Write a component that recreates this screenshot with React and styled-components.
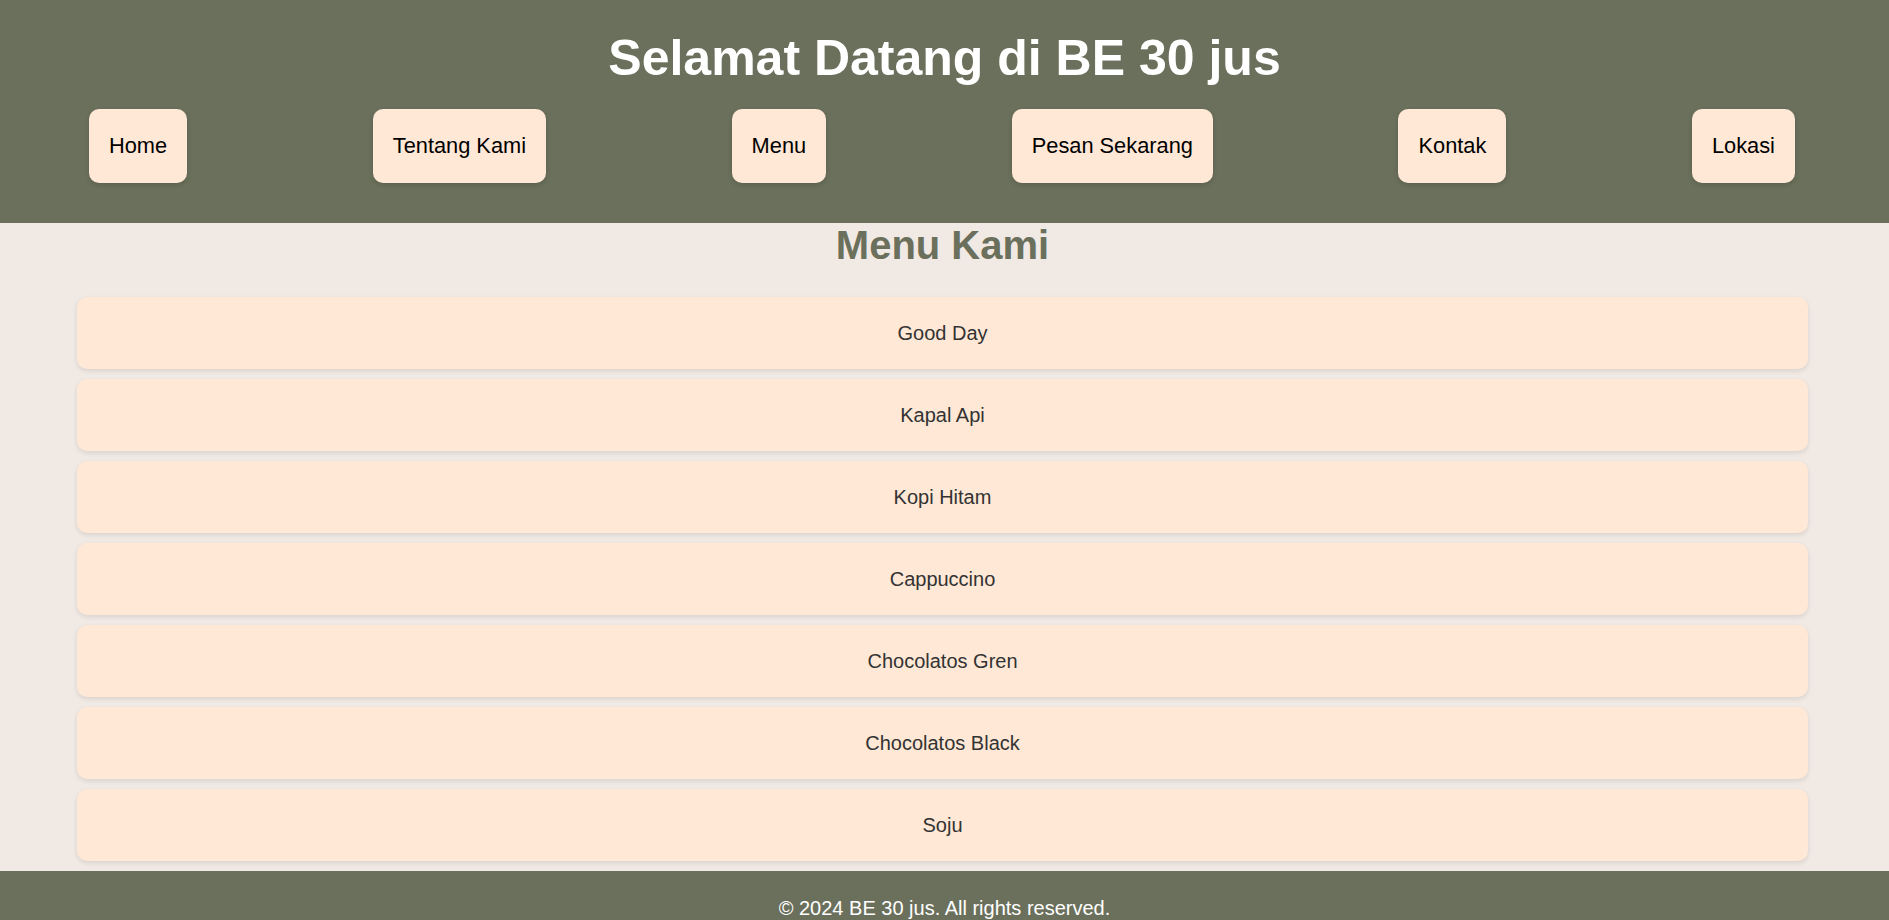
import React from 'react';
import styled, { createGlobalStyle } from 'styled-components';

const GlobalStyle = createGlobalStyle`
  body {
    margin: 0;
    background: #f1e9e4;
    font-family: "Liberation Sans", Arial, sans-serif;
  }
`;

const Header = styled.header`
  background: #6b705c;
  padding: 29px 0 40px;
  text-align: center;
`;

const Title = styled.h1`
  margin: 0 0 22px;
  color: #fff;
  font-size: 50px;
  font-weight: bold;
`;

const Nav = styled.nav`
  display: flex;
  justify-content: space-between;
  padding: 0 94px 0 89px;
`;

const NavButton = styled.a`
  display: block;
  background: #ffe8d6;
  color: #000;
  text-decoration: none;
  font-size: 21.8px;
  line-height: 24px;
  padding: 25px 20px;
  border-radius: 10px;
  box-shadow: 0 2px 5px rgba(0, 0, 0, 0.15);
`;

const Main = styled.main`
  padding: 0 81px 10px 77px;
`;

const SectionTitle = styled.h2`
  margin: 0 0 29px;
  text-align: center;
  color: #6b705c;
  font-size: 40px;
  font-weight: bold;
`;

const MenuList = styled.ul`
  list-style: none;
  margin: 0;
  padding: 0;
  display: flex;
  flex-direction: column;
  gap: 10px;
`;

const MenuItem = styled.li`
  background: #ffe8d6;
  color: #333;
  text-align: center;
  font-size: 20px;
  line-height: 24px;
  padding: 24px;
  border-radius: 10px;
  box-shadow: 0 2px 5px rgba(0, 0, 0, 0.1);
`;

const Footer = styled.footer`
  background: #6b705c;
  color: #fff;
  text-align: center;
  font-size: 20px;
  padding: 26px 0 25px;
`;

const links = ['Home', 'Tentang Kami', 'Menu', 'Pesan Sekarang', 'Kontak', 'Lokasi'];
const menu = [
  'Good Day',
  'Kapal Api',
  'Kopi Hitam',
  'Cappuccino',
  'Chocolatos Gren',
  'Chocolatos Black',
  'Soju',
];

export default function App() {
  return (
    <>
      <GlobalStyle />
      <Header>
        <Title>Selamat Datang di BE 30 jus</Title>
        <Nav>
          {links.map((l) => (
            <NavButton key={l} href="#">{l}</NavButton>
          ))}
        </Nav>
      </Header>
      <Main>
        <SectionTitle>Menu Kami</SectionTitle>
        <MenuList>
          {menu.map((m) => (
            <MenuItem key={m}>{m}</MenuItem>
          ))}
        </MenuList>
      </Main>
      <Footer>© 2024 BE 30 jus. All rights reserved.</Footer>
    </>
  );
}
